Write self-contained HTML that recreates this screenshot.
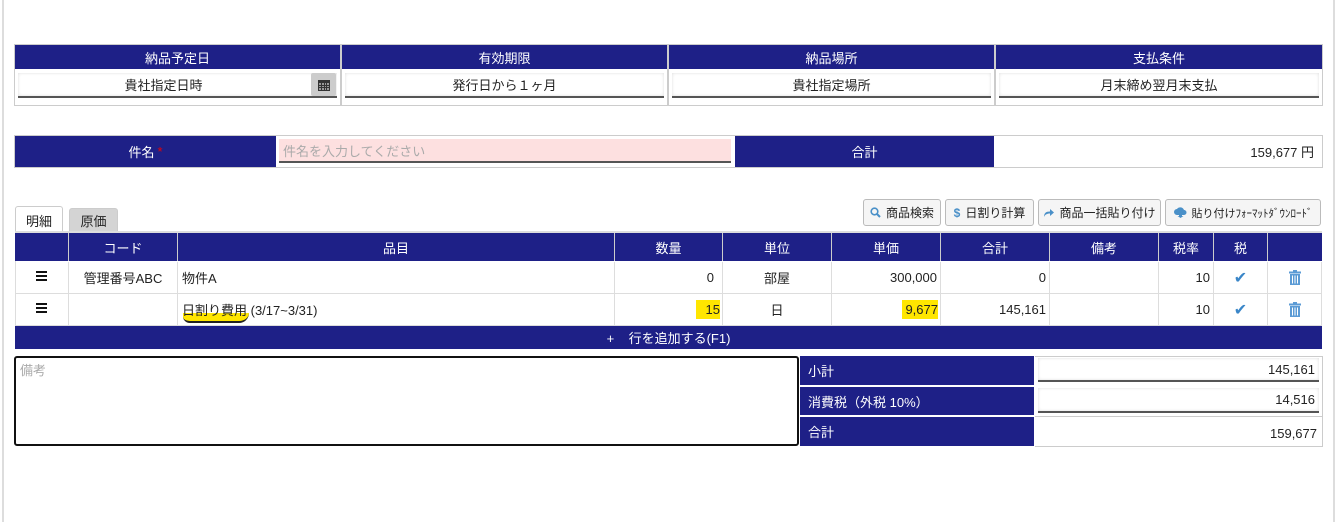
<!DOCTYPE html>
<html><head><meta charset="utf-8"><style>
*{box-sizing:border-box;margin:0;padding:0}
body{width:1338px;height:522px;background:#fff;position:relative;overflow:hidden;font-family:"Liberation Sans","Noto Sans CJK JP",sans-serif;font-size:13px;color:#222}
.a{position:absolute}
.nv{background:#1e2087;color:#fff}
.c{display:flex;align-items:center;justify-content:center}
.r{display:flex;align-items:center;justify-content:flex-end;padding-right:8px}
.l{display:flex;align-items:center;padding-left:8px}
.inp{background:#fff;border-bottom:2px solid #555;box-shadow:inset 0 0 3px #ddd}
.btn{border:1px solid #bbb;border-radius:3px;background:#f5f5f5;font-size:12px;display:flex;align-items:center;justify-content:center;gap:5px;color:#222}
.cell{border-right:1px solid #ddd;border-bottom:1px solid #ddd}
.hb{width:11px;height:10px;background:linear-gradient(#111 0 2px,transparent 2px 4px,#111 4px 6px,transparent 6px 8px,#111 8px 10px)}
</style></head><body>
<div class="a" style="left:2px;top:0;width:2px;height:522px;background:#ddd"></div>
<div class="a" style="left:1333px;top:0;width:2px;height:522px;background:#ddd"></div>

<div class="a" style="left:14px;top:44px;width:1309px;height:62px;background:#ccc"></div>
<div class="a" style="left:15px;top:45px;width:1307px;height:60px;background:#fff"></div>
<div class="a nv c" style="left:15px;top:45px;width:325px;height:24px">納品予定日</div>
<div class="a nv c" style="left:342px;top:45px;width:325px;height:24px">有効期限</div>
<div class="a nv c" style="left:669px;top:45px;width:325px;height:24px">納品場所</div>
<div class="a nv c" style="left:996px;top:45px;width:326px;height:24px">支払条件</div>
<div class="a" style="left:340px;top:45px;width:2px;height:60px;background:#ccc"></div>
<div class="a" style="left:667px;top:45px;width:2px;height:60px;background:#ccc"></div>
<div class="a" style="left:994px;top:45px;width:2px;height:60px;background:#ccc"></div>
<div class="a inp c" style="left:18px;top:73px;width:319px;height:25px;padding-right:28px">貴社指定日時</div>
<div class="a c" style="left:311px;top:73px;width:25px;height:23px;background:#ccc;border-radius:2px"><svg width="12" height="12" viewBox="0 0 12 12"><rect x="0" y="1" width="12" height="11" fill="#333"/><rect x="1" y="4" width="10" height="7" fill="#999"/><g fill="#333"><rect x="1" y="6" width="10" height="1"/><rect x="1" y="8" width="10" height="1"/><rect x="3" y="4" width="1" height="7"/><rect x="6" y="4" width="1" height="7"/><rect x="8" y="4" width="1" height="7"/></g></svg></div>
<div class="a inp c" style="left:345px;top:73px;width:319px;height:25px">発行日から１ヶ月</div>
<div class="a inp c" style="left:672px;top:73px;width:319px;height:25px">貴社指定場所</div>
<div class="a inp c" style="left:999px;top:73px;width:320px;height:25px">月末締め翌月末支払</div>

<div class="a" style="left:14px;top:135px;width:1309px;height:33px;background:#ccc"></div>
<div class="a" style="left:15px;top:136px;width:1307px;height:31px;background:#fff"></div>
<div class="a nv c" style="left:15px;top:136px;width:261px;height:31px">件名<span style="color:#e00;margin-left:3px">*</span></div>
<div class="a l" style="left:279px;top:139px;width:452px;height:24px;background:#fde0e0;border-bottom:2px solid #555;color:#aaa;padding-left:4px">件名を入力してください</div>
<div class="a nv c" style="left:735px;top:136px;width:259px;height:31px">合計</div>
<div class="a r" style="left:996px;top:136px;width:326px;height:31px">159,677 円</div>

<div class="a c" style="left:15px;top:206px;width:48px;height:27px;border:1px solid #ccc;border-bottom:none;border-radius:3px 3px 0 0;background:#fff">明細</div>
<div class="a c" style="left:69px;top:208px;width:49px;height:24px;border:1px solid #ccc;border-radius:3px 3px 0 0;background:#d4d4d4">原価</div>
<div class="a" style="left:15px;top:231px;width:1307px;height:2px;background:#ddd"></div>

<div class="a btn" style="left:863px;top:199px;width:78px;height:27px"><svg width="11" height="11" viewBox="0 0 11 11"><circle cx="4.5" cy="4.5" r="3.3" fill="none" stroke="#4a90c8" stroke-width="1.6"/><path d="M7 7L10 10" stroke="#4a90c8" stroke-width="2"/></svg>商品検索</div>
<div class="a btn" style="left:945px;top:199px;width:89px;height:27px"><span style="color:#4a90c8;font-weight:bold">$</span> 日割り計算</div>
<div class="a btn" style="left:1038px;top:199px;width:123px;height:27px"><svg width="11" height="9" viewBox="0 0 11 9"><path d="M1 9C1 5 3 3.5 7 3.5V1L11 4.5L7 8V5.5C4 5.5 2 6.5 1 9Z" fill="#4a90c8"/></svg>商品一括貼り付け</div>
<div class="a btn" style="left:1165px;top:199px;width:156px;height:27px;font-size:11px"><svg width="13" height="11" viewBox="0 0 13 11"><path d="M3 8A3 3 0 0 1 3 2A4 4 0 0 1 10 3A2.5 2.5 0 0 1 10 8Z" fill="#4a90c8"/><path d="M5 7H8V9H9.5L6.5 11L3.5 9H5Z" fill="#4a90c8"/></svg>貼り付けﾌｫｰﾏｯﾄﾀﾞｳﾝﾛｰﾄﾞ</div>

<div class="a nv" style="left:15px;top:233px;width:1307px;height:28px"></div>
<div class="a" style="left:15px;top:233px;width:1307px;height:28px;display:flex">
<div class="c" style="width:54px;border-right:1px solid #ccc"></div>
<div class="c" style="width:109px;border-right:1px solid #ccc;color:#fff">コード</div>
<div class="c" style="width:437px;border-right:1px solid #ccc;color:#fff">品目</div>
<div class="c" style="width:108px;border-right:1px solid #ccc;color:#fff">数量</div>
<div class="c" style="width:109px;border-right:1px solid #ccc;color:#fff">単位</div>
<div class="c" style="width:109px;border-right:1px solid #ccc;color:#fff">単価</div>
<div class="c" style="width:109px;border-right:1px solid #ccc;color:#fff">合計</div>
<div class="c" style="width:109px;border-right:1px solid #ccc;color:#fff">備考</div>
<div class="c" style="width:55px;border-right:1px solid #ccc;color:#fff">税率</div>
<div class="c" style="width:54px;border-right:1px solid #ccc;color:#fff">税</div>
<div style="width:54px"></div>
</div>

<div class="a" style="left:15px;top:261px;width:1307px;height:65px;border-left:1px solid #ddd"></div>
<div class="a" style="left:15px;top:262px;width:1307px;display:flex;flex-direction:column">
<div style="display:flex;height:32px">
<div class="cell c" style="width:54px;padding-bottom:3px"><div class="hb"></div></div>
<div class="cell c" style="width:109px">管理番号ABC</div>
<div class="cell l" style="width:437px;padding-left:4px">物件A</div>
<div class="cell r" style="width:108px">0</div>
<div class="cell c" style="width:109px">部屋</div>
<div class="cell r" style="width:109px;padding-right:3px">300,000</div>
<div class="cell r" style="width:109px;padding-right:3px">0</div>
<div class="cell" style="width:109px"></div>
<div class="cell r" style="width:55px;padding-right:3px">10</div>
<div class="cell c" style="width:54px;color:#3a86c8;font-size:16px">✔</div>
<div class="cell c" style="width:54px"><svg width="12" height="15" viewBox="0 0 12 15"><rect x="0" y="1.5" width="12" height="2" fill="#5b9bd5"/><rect x="4" y="0" width="4" height="2" fill="#5b9bd5"/><rect x="1" y="4" width="10" height="11" fill="#5b9bd5"/><g fill="#fff"><rect x="3" y="5.5" width="1" height="8"/><rect x="5.5" y="5.5" width="1" height="8"/><rect x="8" y="5.5" width="1" height="8"/></g></svg></div>
</div>
<div style="display:flex;height:32px">
<div class="cell c" style="width:54px;padding-bottom:3px"><div class="hb"></div></div>
<div class="cell" style="width:109px"></div>
<div class="cell l" style="width:437px;padding-left:4px;position:relative"><span style="position:absolute;left:5px;top:19px;width:66px;height:10px;background:#ffe600;border-radius:0 0 30px 20px;border-bottom:2px solid #222"></span><span style="position:relative">日割り費用 (3/17~3/31)</span></div>
<div class="cell r" style="width:108px;padding-right:2px"><span style="background:#ffe600;padding:2px 0 2px 10px">15</span></div>
<div class="cell c" style="width:109px">日</div>
<div class="cell r" style="width:109px;padding-right:2px"><span style="background:#ffe600;padding:2px 0 2px 3px">9,677</span></div>
<div class="cell r" style="width:109px;padding-right:3px">145,161</div>
<div class="cell" style="width:109px"></div>
<div class="cell r" style="width:55px;padding-right:3px">10</div>
<div class="cell c" style="width:54px;color:#3a86c8;font-size:16px">✔</div>
<div class="cell c" style="width:54px"><svg width="12" height="15" viewBox="0 0 12 15"><rect x="0" y="1.5" width="12" height="2" fill="#5b9bd5"/><rect x="4" y="0" width="4" height="2" fill="#5b9bd5"/><rect x="1" y="4" width="10" height="11" fill="#5b9bd5"/><g fill="#fff"><rect x="3" y="5.5" width="1" height="8"/><rect x="5.5" y="5.5" width="1" height="8"/><rect x="8" y="5.5" width="1" height="8"/></g></svg></div>
</div>
</div>
<div class="a nv c" style="left:15px;top:326px;width:1307px;height:23px">+&nbsp;&nbsp;&nbsp;&nbsp;行を追加する(F1)</div>

<div class="a" style="left:14px;top:356px;width:785px;height:90px;border:2px solid #111;border-radius:3px;color:#aaa;padding:2px 4px">備考</div>

<div class="a" style="left:1035px;top:356px;width:288px;height:91px;border:1px solid #ccc;border-left:none"></div>
<div class="a nv l" style="left:800px;top:356px;width:234px;height:29px">小計</div>
<div class="a nv l" style="left:800px;top:387px;width:234px;height:28px">消費税（外税 10%）</div>
<div class="a nv l" style="left:800px;top:417px;width:234px;height:29px">合計</div>
<div class="a inp r" style="left:1038px;top:358px;width:281px;height:24px;padding-right:4px">145,161</div>
<div class="a inp r" style="left:1038px;top:388px;width:281px;height:25px;padding-right:4px">14,516</div>
<div class="a" style="left:1035px;top:416px;width:288px;height:1px;background:#ccc"></div>
<div class="a r" style="left:1036px;top:420px;width:286px;height:26px;padding-right:5px">159,677</div>
</body></html>
